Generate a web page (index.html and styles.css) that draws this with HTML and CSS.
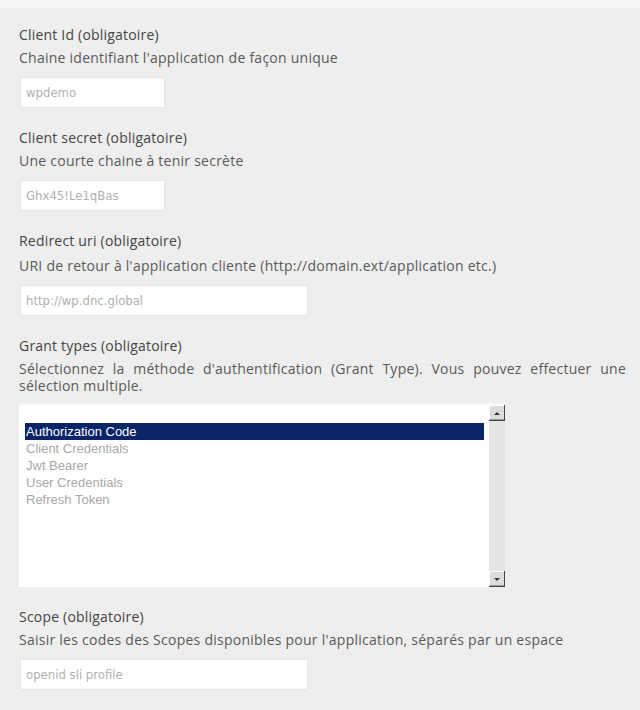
FILE: index.html
```html
<!DOCTYPE html>
<html lang="fr">
<head>
<meta charset="utf-8">
<link rel="stylesheet" href="styles.css">
</head>
<body>
<div class="topbar"></div>
<form class="form">
  <div class="field">
    <div class="label">Client Id (obligatoire)</div>
    <div class="desc">Chaine identifiant l'application de façon unique</div>
    <div class="input short">wpdemo</div>
  </div>
  <div class="field">
    <div class="label">Client secret (obligatoire)</div>
    <div class="desc">Une courte chaine à tenir secrète</div>
    <div class="input short">Ghx45!Le1qBas</div>
  </div>
  <div class="field">
    <div class="label">Redirect uri (obligatoire)</div>
    <div class="desc wide">URI de retour à l'application cliente (http://domain.ext/application etc.)</div>
    <div class="input long">http://wp.dnc.global</div>
  </div>
  <div class="field">
    <div class="label">Grant types (obligatoire)</div>
    <div class="desc justify">Sélectionnez la méthode d'authentification (Grant Type). Vous pouvez effectuer une sélection multiple.</div>
    <div class="listbox">
      <div class="options">
        <div class="opt selected">Authorization Code</div>
        <div class="opt">Client Credentials</div>
        <div class="opt">Jwt Bearer</div>
        <div class="opt">User Credentials</div>
        <div class="opt">Refresh Token</div>
      </div>
      <div class="scrollbar">
        <div class="sbtn"><svg width="16" height="16" viewBox="0 0 16 16"><path d="M0 0h15v1H1v14H0z" fill="#fff"/><path d="M15 0h1v16H0v-1h15z" fill="#444"/><path d="M1 14h14v1H1z" fill="#999"/><path d="M5 10l3-3 3 3z" fill="#333"/></svg></div>
        <div class="track"></div>
        <div class="sbtn"><svg width="16" height="16" viewBox="0 0 16 16"><path d="M0 0h15v1H1v14H0z" fill="#fff"/><path d="M15 0h1v16H0v-1h15z" fill="#444"/><path d="M1 14h14v1H1z" fill="#999"/><path d="M5 7l3 3 3-3z" fill="#333"/></svg></div>
      </div>
    </div>
  </div>
  <div class="field">
    <div class="label">Scope (obligatoire)</div>
    <div class="desc">Saisir les codes des Scopes disponibles pour l'application, séparés par un espace</div>
    <div class="input long">openid sli profile</div>
  </div>
</form>
</body>
</html>
```
FILE: styles.css
```css
html, body {
  margin: 0;
  padding: 0;
  background: #eeeeee;
}
body {
  font-family: "Open Sans", "DejaVu Sans", sans-serif;
  color: #4a4a4a;
}
.topbar {
  height: 8px;
  background: #f7f7f7;
}
.form {
  padding: 18px 14px 0 19px;
  display: flex;
  flex-direction: column;
  gap: 21px;
}
.field {
  display: flex;
  flex-direction: column;
}
.label {
  font-size: 14px;
  letter-spacing: 0.2px;
  line-height: 18px;
  color: #454545;
}
.desc {
  font-size: 14px;
  letter-spacing: 0.25px;
  line-height: 17px;
  color: #5a5a5a;
  margin-top: 5px;
}
.desc.wide {
  margin-top: 7px;
}
.desc.justify {
  text-align: justify;
}
.input {
  margin-top: 11px;
  margin-left: 1px;
  height: 31px;
  box-sizing: border-box;
  background: #fff;
  border: 1px solid #e6e6e6;
  font-family: "DejaVu Sans", sans-serif;
  font-size: 11.7px;
  color: #b0b0b0;
  padding: 0 0 0 5px;
  display: flex;
  align-items: center;
}
.input.short { width: 145px; }
.input.long { width: 288px; }
.listbox {
  margin-top: 9px;
  width: 486px;
  height: 184px;
  display: flex;
  background: #fff;
  border-top: 2px solid #f6f6f6;
  box-sizing: border-box;
}
.options {
  flex: 1;
  padding: 18px 5px 0 6px;
  font-family: "Liberation Sans", Arial, sans-serif;
  font-size: 13px;
}
.opt {
  line-height: 17px;
  height: 17px;
  color: #a8a8a8;
  padding-left: 1px;
}
.opt.selected {
  background: #0a246a;
  color: #fff;
}
.scrollbar {
  width: 16px;
  display: flex;
  flex-direction: column;
  background: #e4e4e4;
}
.sbtn {
  height: 16px;
  background: #dcdcdc;
  display: flex;
}
.track { flex: 1; }
```
